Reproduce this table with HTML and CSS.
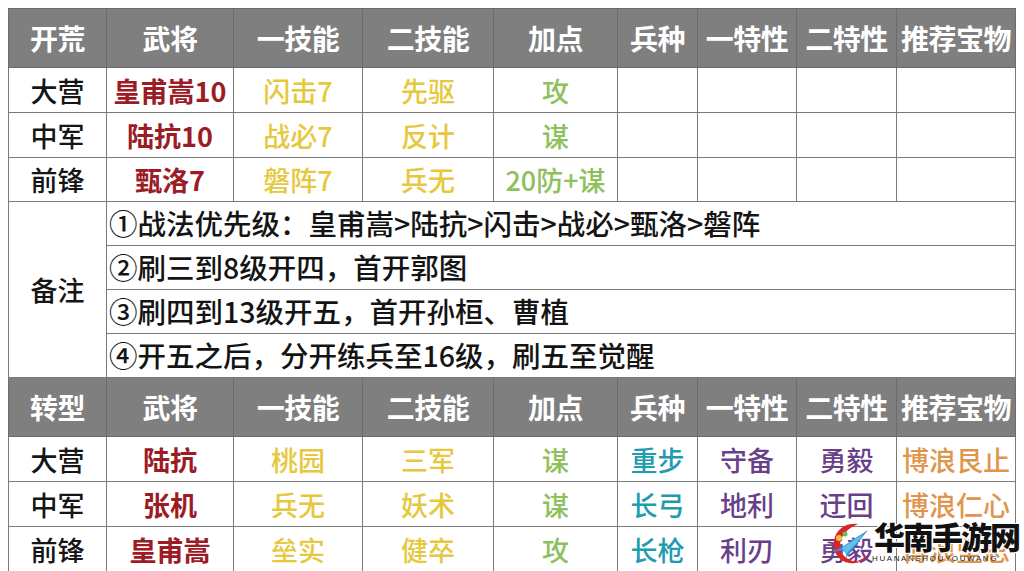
FILE: index.html
```html
<!DOCTYPE html>
<html lang="zh">
<head>
<meta charset="utf-8">
<link rel="stylesheet" href="styles.css">
</head>
<body>
<div class="page">
<table class="grid">
  <colgroup>
    <col class="c1"><col class="c2"><col class="c3"><col class="c4"><col class="c5"><col class="c6"><col class="c7"><col class="c8"><col class="c9">
  </colgroup>
  <tr class="head">
    <th>开荒</th><th>武将</th><th>一技能</th><th>二技能</th><th>加点</th><th>兵种</th><th>一特性</th><th>二特性</th><th>推荐宝物</th>
  </tr>
  <tr class="row">
    <td class="lab">大营</td><td class="red">皇甫嵩10</td><td class="yel">闪击7</td><td class="yel">先驱</td><td class="grn">攻</td><td></td><td></td><td></td><td></td>
  </tr>
  <tr class="row">
    <td class="lab">中军</td><td class="red">陆抗10</td><td class="yel">战必7</td><td class="yel">反计</td><td class="grn">谋</td><td></td><td></td><td></td><td></td>
  </tr>
  <tr class="row r3">
    <td class="lab">前锋</td><td class="red">甄洛7</td><td class="yel">磐阵7</td><td class="yel">兵无</td><td class="grn">20防+谋</td><td></td><td></td><td></td><td></td>
  </tr>
  <tr class="note">
    <td class="lab" rowspan="4">备注</td><td class="txt" colspan="8">①战法优先级：皇甫嵩&gt;陆抗&gt;闪击&gt;战必&gt;甄洛&gt;磐阵</td>
  </tr>
  <tr class="note"><td class="txt" colspan="8">②刷三到8级开四，首开郭图</td></tr>
  <tr class="note"><td class="txt" colspan="8">③刷四到13级开五，首开孙桓、曹植</td></tr>
  <tr class="note"><td class="txt" colspan="8">④开五之后，分开练兵至16级，刷五至觉醒</td></tr>
  <tr class="head">
    <th>转型</th><th>武将</th><th>一技能</th><th>二技能</th><th>加点</th><th>兵种</th><th>一特性</th><th>二特性</th><th>推荐宝物</th>
  </tr>
  <tr class="row">
    <td class="lab">大营</td><td class="red">陆抗</td><td class="yel">桃园</td><td class="yel">三军</td><td class="grn">谋</td><td class="teal">重步</td><td class="pur">守备</td><td class="pur">勇毅</td><td class="org">博浪艮止</td>
  </tr>
  <tr class="row">
    <td class="lab">中军</td><td class="red">张机</td><td class="yel">兵无</td><td class="yel">妖术</td><td class="grn">谋</td><td class="teal">长弓</td><td class="pur">地利</td><td class="pur">迂回</td><td class="org">博浪仁心</td>
  </tr>
  <tr class="row">
    <td class="lab">前锋</td><td class="red">皇甫嵩</td><td class="yel">垒实</td><td class="yel">健卒</td><td class="grn">攻</td><td class="teal">长枪</td><td class="pur">利刃</td><td class="pur">勇毅</td><td class="org">博浪坚忍</td>
  </tr>
</table>
<div class="mark">
  <svg class="logo" viewBox="0 0 44 50" width="44" height="50">
    <path d="M30 6 C14 4 4 16 6 30 C8 42 20 48 32 44 C22 44 12 38 12 28 C12 18 20 10 30 6 Z" fill="#d9262b"/>
    <path d="M4 34 C14 30 24 22 40 12 C32 22 26 30 18 40 C20 32 14 32 4 34 Z" fill="#2f8fd8"/>
    <path d="M14 30 C20 26 28 20 36 16 C30 24 24 30 18 36 Z" fill="#5fc0ee"/>
    <circle cx="11" cy="20" r="3" fill="#f2c230"/>
    <circle cx="17" cy="16" r="2.5" fill="#6cc04a"/>
    <path d="M26 44 C34 44 40 40 42 34 C38 40 32 42 26 44 Z" fill="#d9262b"/>
  </svg>
  <div class="brand">
    <span class="cn">华南手游网</span>
    <span class="en">HUANANSHOUYOUWANG</span>
  </div>
</div>
</div>
</body>
</html>
```

FILE: styles.css
```css
html, body {
  margin: 0;
  padding: 0;
  background: #ffffff;
}
body {
  width: 1024px;
  height: 571px;
  overflow: hidden;
  font-family: "Noto Sans CJK SC", "Microsoft YaHei", "Liberation Sans", sans-serif;
}
.page {
  position: relative;
  padding: 8px 0 0 8px;
}
.grid {
  border-collapse: collapse;
  table-layout: fixed;
  width: 1007px;
}
.c1 { width: 98px; }
.c2 { width: 127px; }
.c3 { width: 129px; }
.c4 { width: 131px; }
.c5 { width: 124px; }
.c6 { width: 80px; }
.c7 { width: 99px; }
.c8 { width: 100px; }
.c9 { width: 119px; }

.grid th, .grid td {
  padding: 0;
  text-align: center;
  white-space: nowrap;
  overflow: hidden;
  line-height: 1;
}
.grid td {
  border: 1px solid #7a7a7a;
  font-size: 27px;
  font-weight: 500;
}
.head {
  height: 59px;
}
.head th {
  background: #7f7f7f;
  color: #ffffff;
  font-size: 28px;
  font-weight: 700;
  border: 1px solid #6c6c6c;
  letter-spacing: -0.5px;
}
.row { height: 45px; }
.row.r3 { height: 44px; }
.note { height: 44px; }
.lab { color: #151515; font-weight: 500; }
.red { color: #9c1c26; font-weight: 700 !important; }
.yel { color: #e6c83c; }
.grn { color: #8ec05c; }
.teal { color: #1f9cb0; }
.pur { color: #693f8a; }
.org { color: #e0954c; }
.txt {
  text-align: left !important;
  padding-left: 2px !important;
  color: #141414;
  font-size: 28.5px !important;
  font-weight: 500;
}

.mark {
  position: absolute;
  left: 828px;
  top: 518px;
  display: flex;
  align-items: flex-start;
  gap: 2px;
}
.logo { display: block; }
.brand {
  display: flex;
  flex-direction: column;
  align-items: flex-start;
}
.cn {
  font-size: 31px;
  font-weight: 900;
  color: #111;
  letter-spacing: -2px;
  line-height: 36px;
  text-shadow: 1px 1px 0 #fff, -1px -1px 0 #fff, 1px -1px 0 #fff, -1px 1px 0 #fff;
}
.en {
  font-family: "Liberation Sans", sans-serif;
  font-size: 8px;
  letter-spacing: 1.6px;
  color: #222;
  margin-left: -2px;
  line-height: 10px;
}
```
